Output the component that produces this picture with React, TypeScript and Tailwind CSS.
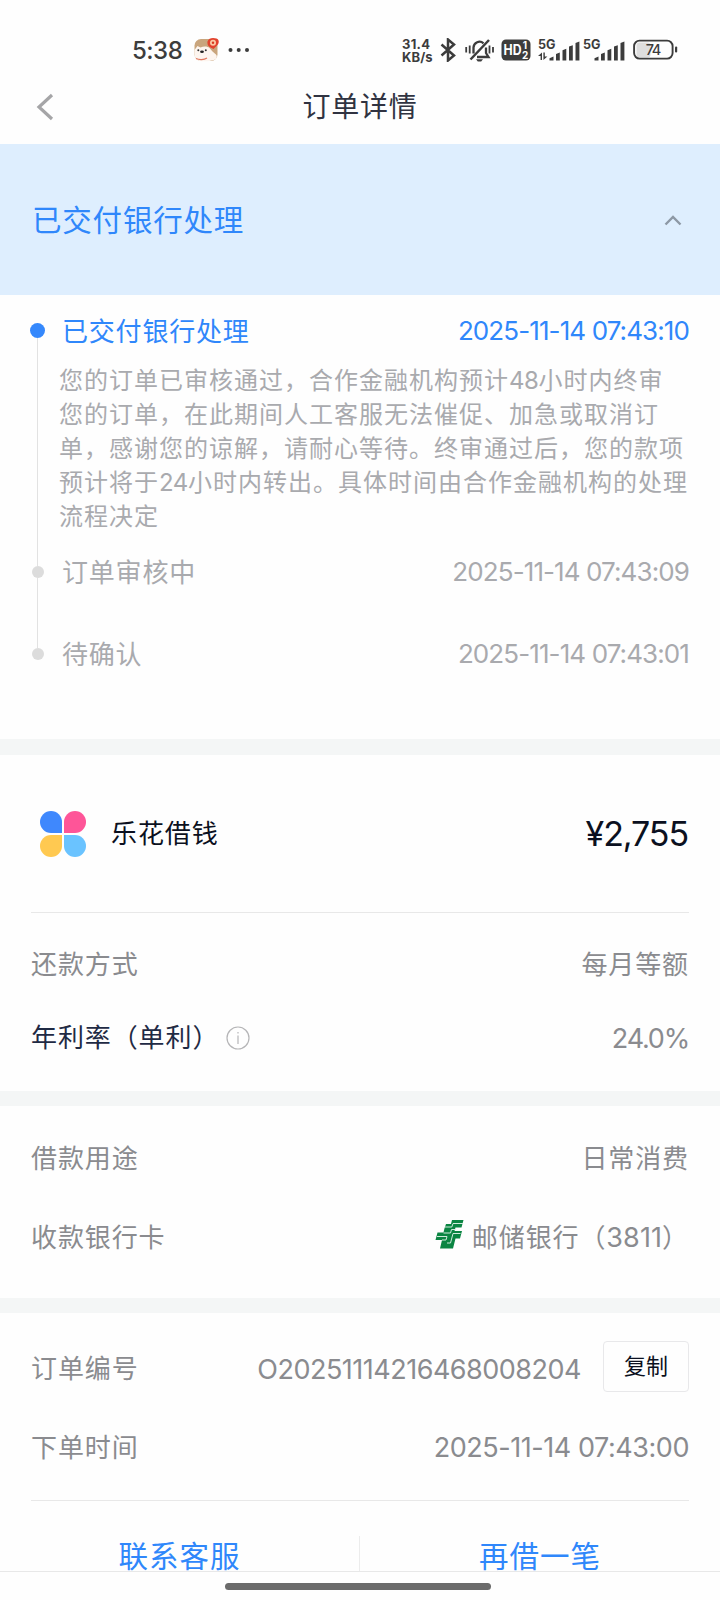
import React, { useState } from 'react'

const timeline = [
  {
    title: '已交付银行处理',
    time: '2025-11-14 07:43:10',
    detail: [
      '您的订单已审核通过，合作金融机构预计48小时内终审',
      '您的订单，在此期间人工客服无法催促、加急或取消订',
      '单，感谢您的谅解，请耐心等待。终审通过后，您的款项',
      '预计将于24小时内转出。具体时间由合作金融机构的处理',
      '流程决定',
    ],
  },
  { title: '订单审核中', time: '2025-11-14 07:43:09' },
  { title: '待确认', time: '2025-11-14 07:43:01' },
]

// 数字比汉字的字距更紧
function DetailLine({ text }: { text: string }) {
  return (
    <div>
      {text.split(/(\d+)/).map((part, i) =>
        /^\d/.test(part) ? (
          <span key={i} className="tracking-[-0.4px]">
            {part}
          </span>
        ) : (
          part
        )
      )}
    </div>
  )
}

function Signal({ arrows }: { arrows?: boolean }) {
  return (
    <svg width="42" height="24" viewBox="0 0 42 24" fill="#3c3c3c">
      <text x="0" y="11" fontSize="12.500" fontWeight="700" textLength="17.500" lengthAdjust="spacingAndGlyphs">5G</text>
      {arrows && <path d="M4 14.500V22H2.600v-4H0zM5.400 22v-7.500h1.400v4h2.600z" />}
      <path d="M11.500 22.500v-2.300l4-1.700v4zM18 22.500v-6.500l3.800-1.400v7.900zM24.500 22.500V12.200l3.800-1.400v11.700zM31 22.500V8.600l3.800-1.400v15.300zM37.500 22.500V5l3.900-1.500v19z" />
    </svg>
  )
}

function StatusBar() {
  return (
    <div className="flex h-[76px] items-center pt-[24px] text-[#3c3c3c]">
      <span className="ml-[132px] w-[61px] pt-[1px] text-[24px] font-medium leading-[50px] tracking-[-0.5px]">5:38</span>
      <svg width="26" height="26" viewBox="0 0 26 26">
        <rect x="1.500" y="2" width="23" height="22" rx="6.500" fill="#c9a57d" />
        <path d="M1.500 13l3-4 3 1.500c3-1.500 7-1.500 9 .5l3 3.500 3.500 3c1.500 1.500 1 4.500-2 5.500-4 1.300-10 1.500-14 1-4-.6-5.500-4-5.500-7z" fill="#fdf5ef" />
        <path d="M14.500 4.500c1-4 6-4 9-3s3 5 0 7.500l-3 3-3-1.500c-2-1-3.500-3-3-6z" fill="#e2422d" />
        <circle cx="20" cy="5.800" r="3" fill="#fbc9a4" />
        <circle cx="20" cy="5.800" r="1.200" fill="#d83a20" />
        <circle cx="5.300" cy="13.300" r="1" fill="#333" />
        <circle cx="12.800" cy="13.300" r="1" fill="#333" />
        <ellipse cx="9" cy="14.800" rx="1.900" ry="1.200" fill="#222" />
        <path d="M3 21.500c3 1.500 8 1.500 11-.5" stroke="#e0785f" strokeWidth="1.200" fill="none" />
      </svg>
      <svg className="ml-[9px]" width="22" height="6" viewBox="0 0 22 6" fill="#3c3c3c">
        <circle cx="2.500" cy="3" r="2" />
        <circle cx="10.700" cy="3" r="2" />
        <circle cx="19" cy="3" r="2" />
      </svg>
      <div className="ml-[152px] w-[34px] text-[13px] font-bold">
        <div className="h-[12px] leading-[12px] tracking-[0.3px]">31.4</div>
        <div className="h-[13px] leading-[14px] tracking-[0.1px]">KB/s</div>
      </div>
      <svg className="ml-[4px]" width="16" height="24" viewBox="0 0 16 24" fill="none" stroke="#3c3c3c" strokeWidth="2.500">
        <path d="M1.500 6.500L14 17.500 8 22.500V1.500L14 6.500 1.500 17.500" />
      </svg>
      <svg className="ml-[9px]" width="29" height="24" viewBox="0 0 29 24" fill="none" stroke="#3c3c3c" strokeWidth="2.300">
        <path d="M8.500 15.500V9.500a6 6 0 0 1 10-4.200M21 9.500V15l2.500 4H12" />
        <path d="M24 2L5.500 21.500" strokeWidth="2.500" />
        <path d="M1.200 9v5.500M4.700 7.500v8M24.500 7.500v8M28 9v5.500" strokeWidth="1.800" />
        <path d="M11 21.200h7l-1.800 2.200h-3.400z" fill="#3c3c3c" stroke="none" />
      </svg>
      <svg className="ml-[7px]" width="30" height="22" viewBox="0 0 30 22">
        <rect x="0.500" y="0.500" width="29" height="21" rx="4.500" fill="#3c3c3c" />
        <text x="2.500" y="16" fontSize="14" fontWeight="700" fill="#fff" textLength="18" lengthAdjust="spacingAndGlyphs">HD</text>
        <text x="21.800" y="10.300" fontSize="10" fontWeight="700" fill="#fff">1</text>
        <text x="21" y="19.600" fontSize="10" fontWeight="700" fill="#fff">2</text>
      </svg>
      <div className="ml-[7px] flex gap-[3px]">
        <Signal arrows />
        <Signal />
      </div>
      <svg className="ml-[8px]" width="45" height="22" viewBox="0 0 45 22">
        <rect x="3.500" y="3.500" width="14" height="15" rx="3" fill="#dedede" />
        <rect x="1.100" y="1.600" width="38.500" height="18" rx="5.500" fill="none" stroke="#3c3c3c" strokeWidth="1.900" />
        <rect x="42" y="7.500" width="2.200" height="6" rx="1" fill="#3c3c3c" />
        <text x="20.500" y="15.800" fontSize="14.500" fontWeight="500" textAnchor="middle" fill="#3c3c3c" textLength="15.500">74</text>
      </svg>
    </div>
  )
}

function Row({ label, className = '', children }: { label: string; className?: string; children: React.ReactNode }) {
  return (
    <div className={`flex items-center justify-between text-[26px] leading-[40px] text-[#8a8b8f] ${className}`}>
      <span className="tracking-[0.9px]">{label}</span>
      {children}
    </div>
  )
}

export default function App() {
  const [open, setOpen] = useState(true)

  return (
    <div className="relative flex h-[1600px] w-[720px] flex-col overflow-hidden bg-[#fefefe] font-['Inter','Noto_Sans_CJK_SC',sans-serif]">
      <StatusBar />

      {/* 标题栏 */}
      <div className="grid h-[68px] grid-cols-[100px_1fr_100px] items-center pb-[7px]">
        <svg className="ml-[36px]" width="18" height="28" viewBox="0 0 18 28" fill="none" stroke="#a5a5a7" strokeWidth="3.200">
          <path d="M16 2L3 14 16 26" />
        </svg>
        <h1 className="text-center text-[28px] leading-[40px] tracking-[0.8px] text-[#303341]">订单详情</h1>
      </div>

      {/* 当前状态 */}
      <button
        onClick={() => setOpen(!open)}
        className="flex h-[151px] shrink-0 items-center justify-between bg-[#deeefe] pl-[32px] pr-[38px] pt-[1px] text-[#2f87fb]"
      >
        <span className="text-[29.5px] leading-[40px] tracking-[0.8px]">已交付银行处理</span>
        <svg className={open ? '' : 'rotate-180'} width="18" height="12" viewBox="0 0 18 12" fill="none" stroke="#8d98a5" strokeWidth="2.400">
          <path d="M1.500 10.500L9 3l7.500 7.500" />
        </svg>
      </button>

      {/* 进度 */}
      {open && (
        <div className="h-[444px] shrink-0 pl-[30px] pr-[31px] pt-[28px]">
          {timeline.map((item, i) => (
            <div key={item.title} className={`flex ${i === 0 ? 'h-[243px]' : 'h-[82px]'}`}>
              <div className="flex w-[15px] shrink-0 flex-col items-center">
                <div className={i === 0 ? 'size-[15px] rounded-full bg-[#3588fc]' : 'size-[12px] rounded-full bg-[#dcdcdc]'} />
                {i < timeline.length - 1 && <div className="w-px flex-1 bg-[#e2e2e2]" />}
              </div>
              <div className="min-w-0 flex-1 pl-[14px]">
                <div
                  className={`flex justify-between pl-[3px] text-[26px] ${
                    i === 0 ? 'leading-[17px] text-[#2f87fb]' : 'leading-[13px] text-[#a9aaae]'
                  }`}
                >
                  <span className="tracking-[0.8px]">{item.title}</span>
                  <span className="-mt-px tracking-[-0.9px]">{item.time}</span>
                </div>
                {item.detail && (
                  <div className="mt-[24px] whitespace-nowrap text-[24px] leading-[34.1px] tracking-[1px] text-[#a9aaae]">
                    {item.detail.map((line) => (
                      <DetailLine key={line} text={line} />
                    ))}
                  </div>
                )}
              </div>
            </div>
          ))}
        </div>
      )}

      <div className="h-[16px] shrink-0 bg-[#f4f6f6]" />

      {/* 产品与金额 */}
      <div className="h-[336px] shrink-0 px-[31px]">
        <div className="flex h-[157px] items-center">
          <div className="ml-[9px] grid grid-cols-2 gap-[2px]">
            <div className="size-[22px] rounded-full rounded-br-[5px] bg-[#3f88fd]" />
            <div className="size-[22px] rounded-full rounded-bl-[5px] bg-[#fe5598]" />
            <div className="size-[22px] rounded-full rounded-tr-[5px] bg-[#ffc951]" />
            <div className="size-[22px] rounded-full rounded-tl-[5px] bg-[#6ac3ff]" />
          </div>
          <span className="ml-[25px] text-[26px] leading-[40px] tracking-[0.9px] text-[#0b1020]">乐花借钱</span>
          <span className="ml-auto mr-[1px] text-[34px] leading-[40px] tracking-[-1.1px] text-[#0b1020]">¥2,755</span>
        </div>
        <div className="h-px bg-[#e8e8e8]" />
        <Row label="还款方式" className="mt-[32px]">
          <span className="tracking-[0.9px]">每月等额</span>
        </Row>
        <div className="mt-[32px] flex items-center text-[26px] leading-[40px] text-[#1f2a44]">
          <span className="tracking-[0.9px]">年利率（单利）</span>
          <svg className="ml-[7px]" width="24" height="24" viewBox="0 0 24 24" fill="none" stroke="#b5b5b7" strokeWidth="1.200">
            <circle cx="12" cy="12" r="11" />
            <path d="M12 9.500V18M12 6v1.500" />
          </svg>
          <span className="ml-auto pt-[2px] text-[27px] tracking-[-1.2px] text-[#8a8b8f]">24.0%</span>
        </div>
      </div>
      <div className="h-[15px] shrink-0 bg-[#f4f6f6]" />

      {/* 用途与收款卡 */}
      <div className="h-[192px] shrink-0 px-[31px] pt-[33px]">
        <Row label="借款用途">
          <span className="tracking-[0.9px]">日常消费</span>
        </Row>
        <Row label="收款银行卡" className="mt-[39px]">
          <span className="flex items-center">
            <svg className="mb-[9px] mr-[8px]" width="29" height="30" viewBox="0 0 29 30">
              <path d="M17 1h11.500l-2 7.500h-6L19.500 12H27l-2 7.500h-4.500L18 29.500H5l2-8.500H.5l2-7.500h6l.8-3.500L11 5h5z" fill="#0b8542" />
              <path d="M28 4.500H18l-1.200 3.500H10M25.500 14.500H18l-2.500 9.500H12M8.500 14h7l1-3.500h4M2 17.500h10l-1 3.500H7" fill="none" stroke="#cfeadb" strokeWidth="1" />
            </svg>
            <span className="tracking-[0.9px]">邮储银行（</span>
            <span className="text-[27px] tracking-[0.1px]">3811</span>
            <span className="tracking-[0.9px]">）</span>
          </span>
        </Row>
      </div>
      <div className="h-[15px] shrink-0 bg-[#f4f6f6]" />

      {/* 订单信息 */}
      <div className="h-[187px] shrink-0 px-[31px] pt-[30px]">
        <Row label="订单编号" className="h-[52px]">
          <span className="ml-auto pt-[1px] text-[27px] tracking-[-0.5px]">O20251114216468008204</span>
          <button className="mb-[5px] ml-[22px] h-[51px] w-[86px] rounded-[4px] border border-[#e8e8ea] pb-[2px] text-[22px] text-[#0b1020]">复制</button>
        </Row>
        <Row label="下单时间" className="mt-[32px]">
          <span className="pt-[1px] text-[27px] tracking-[-0.45px]">2025-11-14 07:43:00</span>
        </Row>
      </div>
      <div className="mx-[31px] h-px shrink-0 bg-[#e8e8e8]" />

      {/* 底部操作 */}
      <div className="flex h-[71px] shrink-0 border-b border-[#e8e8e8] pt-[35px] text-[29.5px] leading-[40px] tracking-[1px] text-[#2f87fb]">
        <button className="w-[360px] border-r border-[#ececec]">联系客服</button>
        <button className="flex-1">再借一笔</button>
      </div>
      <div className="ml-[225px] mt-[11px] h-[7px] w-[266px] shrink-0 rounded-full bg-[#6b6b6b]" />
    </div>
  )
}
